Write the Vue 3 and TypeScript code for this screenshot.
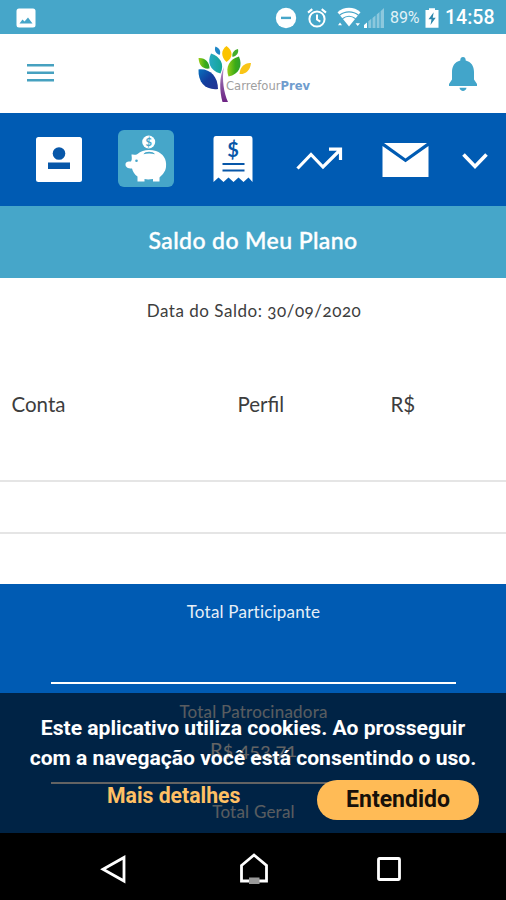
<script setup lang="ts">
interface TotalRow {
  label: string
  value: string
  kind: string
}

const columns: string[] = ['Conta', 'Perfil', 'R$']
const totals: TotalRow[] = [
  { label: 'Total Participante', value: '', kind: 'participante' },
  { label: 'Total Patrocinadora', value: 'R$ 453,71', kind: 'patrocinadora' },
  { label: 'Total Geral', value: '', kind: 'geral' },
]
</script>

<template>
  <div class="screen">
    <div class="status">
      <svg class="s-image" width="20" height="20" viewBox="0 0 20 20">
        <rect x="0.5" y="0.5" width="19" height="19" rx="2.5" fill="#fff" />
        <path d="M3.500 15.500 6.500 11.500 8.500 13.500 12 9.500 16.500 15.500Z" fill="#46a6c9" />
      </svg>
      <svg class="s-dnd" width="22" height="22" viewBox="0 0 22 22">
        <circle cx="11" cy="11" r="10.200" fill="#fff" />
        <rect x="6" y="9.700" width="10" height="2.400" fill="#46a6c9" />
      </svg>
      <svg class="s-alarm" width="20" height="20" viewBox="0 0 20 20" fill="none" stroke="#fff" stroke-width="2">
        <circle cx="10" cy="11" r="7.600" />
        <path d="M10 6.500V11.500L13.300 13.600M1 4.600 5.300 1.100M19 4.600 14.700 1.100" />
      </svg>
      <svg class="s-wifi" width="24" height="21" viewBox="0 0 24 21">
        <path d="M0.500 5.200C7 -0.700 17 -0.700 23.500 5.200L12 19.500Z" fill="#fff" />
        <path d="M2.500 8.200C8 3.700 16 3.700 21.500 8.200M5.300 11.800C9.500 8.600 14.500 8.600 18.700 11.800" fill="none" stroke="#46a6c9" stroke-width="1.200" />
        <path d="M1 18.200 3 15.500 5 18.200ZM18.500 16.200H23L20.700 19Z" fill="#fff" />
      </svg>
      <svg class="s-signal" width="20" height="20" viewBox="0 0 20 20" fill="#fff">
        <path d="M0 20V17L3 14.500V20Z" />
        <path d="M4.300 20V13.300L7.300 10.800V20ZM8.500 20V10L11.500 7.400V20ZM12.700 20V6.500L15.500 4V20ZM16.600 20V3.200L20 0V20Z" opacity=".38" />
      </svg>
      <span class="percent">89%</span>
      <svg class="s-battery" width="14" height="20" viewBox="0 0 14 20">
        <path d="M0.500 2H4V0.300H10V2H13.500V19.700H0.500Z" fill="#fff" />
        <path d="M8.700 4.300 3.500 11.200H6.500L5.500 17 10.700 9.700H7.700Z" fill="#2d87ac" />
      </svg>
      <span class="clock">14:58</span>
    </div>

    <header class="header">
      <svg class="burger" width="27" height="20" viewBox="0 0 27 20" fill="#46a1c0">
        <rect width="27" height="2.500" y="1" /><rect width="27" height="2.500" y="8.500" /><rect width="27" height="2.500" y="16" />
      </svg>
      <svg class="logo" width="116" height="60" viewBox="0 0 116 60">
        <defs>
          <linearGradient id="navy" x2="1" y2="1"><stop stop-color="#0871be" /><stop offset=".5" stop-color="#123d9d" /><stop offset="1" stop-color="#243294" /></linearGradient>
          <linearGradient id="teal" x2="1"><stop stop-color="#27aac4" /><stop offset="1" stop-color="#13a594" /></linearGradient>
          <linearGradient id="green" x2="1"><stop stop-color="#99cd16" /><stop offset=".6" stop-color="#3bab17" /><stop offset="1" stop-color="#2b9f2e" /></linearGradient>
          <linearGradient id="trunk" y2="1" x2="0"><stop stop-color="#c59bcc" /><stop offset=".5" stop-color="#8754a0" /><stop offset="1" stop-color="#6d2384" /></linearGradient>
        </defs>
        <path d="M1.500 24.500C12 23 21 31 21 44C9 45.500 1 38 1.500 24.500Z" fill="url(#navy)" />
        <path d="M1.500 13C8 12.500 12.500 17 12.500 23.500C5.500 24.500 2 20 1.500 13Z" fill="url(#green)" />
        <path d="M14 8.500C23 11.500 28 19 23.500 28.500C12.500 25.500 10 17 14 8.500Z" fill="url(#teal)" />
        <path d="M18.500 1.500C22.500 3 24.300 6.500 22.500 10C18.500 8.500 17 5 18.500 1.500Z" fill="#1e86c6" />
        <path d="M29.500 1C36.500 6 36 13 29.500 17C23.500 11.500 24 5 29.500 1Z" fill="#fbc300" />
        <path d="M41 4C42 8 39.500 11 35.500 12C34.500 8 37 5 41 4Z" fill="#42ad29" />
        <path d="M42 11.500C46 21 42 29.500 31.500 31.500C28 22 32.500 14 42 11.500Z" fill="url(#green)" />
        <path d="M54 18C53 26 48.500 29.500 42.500 29C43 21.500 48 17.500 54 18Z" fill="#f9c516" />
        <path d="M27 22C24.500 34 27 48 31 57H25.500C22.500 46 22 32 27 22Z" fill="url(#trunk)" />
        <text class="brand" x="29" y="44.500" textLength="84" lengthAdjust="spacingAndGlyphs">Carrefour<tspan class="brand-bold">Prev</tspan></text>
      </svg>
      <svg class="bell" width="30" height="36" viewBox="0 0 30 36" fill="#42a5ca">
        <path d="M15 1C13 1 12.300 2.500 12.300 4.400C6.700 5.700 4 10 4 16V23.500L1 28V30H29V28L26 23.500V16C26 10 23.300 5.700 17.700 4.400C17.700 2.500 17 1 15 1Z" />
        <path d="M11.500 31.800H18.500C18 36 12 36 11.500 31.800Z" />
      </svg>
    </header>

    <nav class="nav">
      <svg class="n-card" width="46" height="45" viewBox="0 0 46 45">
        <rect width="46" height="45" rx="2.500" fill="#fff" />
        <circle cx="23" cy="16.500" r="6.300" fill="#0757a9" />
        <rect x="12" y="25.500" width="22" height="6.500" fill="#0757a9" />
      </svg>
      <span class="active">
        <svg width="56" height="57" viewBox="0 0 56 57">
          <circle cx="30.700" cy="12" r="6.500" fill="#fff" />
          <text class="coin" x="30.700" y="16" text-anchor="middle">$</text>
          <path d="M13.500 24.500C16 24 18 25.500 19.500 24C24 19.500 32 19 38 21C45 23.500 49 29 48 37C47.500 42 44 45 41.500 47.500V51.500H35V49C31 49.600 29 49.600 26.500 49V51.500H19.500V46.500C16.500 44.500 15 42 14 38.500C9.500 38.500 7.500 37 7.500 34.500C7.500 32 9.500 31.500 13 31.500C14.500 29 13.500 27 13.500 24.500Z" fill="#fff" />
          <path d="M25.500 24.300C26.500 21 35.500 21 37 24.300C33 23.300 29 23.300 25.500 24.300Z" fill="#46a6c9" />
          <circle cx="18.500" cy="30.700" r="1.300" fill="#46a6c9" />
        </svg>
      </span>
      <svg class="n-receipt" width="40" height="47" viewBox="0 0 40 47">
        <path d="M3 0H37Q39.500 0 39.500 3V46L35.500 41.500 30.500 46 25.500 41.500 20.500 46 15.500 41.500 10.500 46 5.500 41.500 0.500 46V3Q0.500 0 3 0Z" fill="#fff" />
        <text class="bill" x="20" y="21" text-anchor="middle">$</text>
        <path d="M9.500 28H31.500M9.500 34.500H31.500" stroke="#0757a9" stroke-width="2.200" />
      </svg>
      <svg class="n-trend" width="47" height="24" viewBox="0 0 47 24" fill="none" stroke="#fff" stroke-width="3.200">
        <path d="M1.500 21.500 15 7.500 27 20 43.500 3.500M33 2.200H44.500V13" />
      </svg>
      <svg class="n-mail" width="47" height="34" viewBox="0 0 47 34" fill="#fff">
        <path d="M2 0H45L23.500 15.500Z" />
        <path d="M0.500 3 23.500 19.200 46.500 3V34H0.500Z" />
      </svg>
      <svg class="n-more" width="26" height="18" viewBox="0 0 26 18" fill="none" stroke="#fff" stroke-width="3.600">
        <path d="M1.500 2.500 13 14.500 24.500 2.500" />
      </svg>
    </nav>

    <h1 class="title">Saldo do Meu Plano</h1>

    <main class="content">
      <p class="date">Data do Saldo: 30/09/2020</p>
      <div class="columns">
        <span v-for="column in columns" :key="column">{{ column }}</span>
      </div>
      <div class="row"></div>
      <div class="row"></div>
    </main>

    <section class="totals">
      <div v-for="total in totals" :key="total.kind" class="total" :class="total.kind">
        <span class="label">{{ total.label }}</span>
        <span class="value">{{ total.value }}</span>
      </div>
      <aside class="cookies">
        <p class="notice">Este aplicativo utiliza cookies. Ao prosseguir<br>com a navegação você está consentindo o uso.</p>
        <div class="actions">
          <a class="details">Mais detalhes</a>
          <button class="accept">Entendido</button>
        </div>
      </aside>
    </section>

    <footer class="system">
      <svg width="28" height="30" viewBox="0 0 28 30" fill="none" stroke="#fff" stroke-width="2.800"><path d="M24 3.500V27L3 15.200Z" /></svg>
      <svg class="home" width="30" height="32" viewBox="0 0 30 32"><path d="M2.500 12.500 15 2 27.500 12.500V28H2.500Z" fill="none" stroke="#fff" stroke-width="2.800" /><rect x="10" y="24.500" width="10.500" height="6.500" fill="#999" /></svg>
      <svg width="26" height="26" viewBox="0 0 26 26"><rect x="2.500" y="2.500" width="21" height="21" rx="1" fill="none" stroke="#fff" stroke-width="2.800" /></svg>
    </footer>
  </div>
</template>

<style>
body {
  margin: 0;
}
</style>

<style scoped>
.screen {
  width: 506px;
  height: 900px;
  display: flex;
  flex-direction: column;
  overflow: hidden;
  background: #fff;
  color: #3d3d3d;
  font-family: Lato, "Liberation Sans", sans-serif;
}
.screen svg {
  display: block;
  flex: none;
}
.status {
  height: 34px;
  display: flex;
  align-items: center;
  box-sizing: border-box;
  padding: 1px 0 0 16px;
  background: #46a6c9;
  color: #fff;
  font-family: Roboto, sans-serif;
  white-space: nowrap;
}
.s-dnd {
  margin-left: 239px;
}
.s-alarm {
  margin-left: 9.500px;
}
.s-wifi {
  margin-left: 10px;
}
.s-signal {
  margin-left: 3.500px;
}
.percent {
  width: 34px;
  margin-left: 6px;
  font-size: 16px;
  letter-spacing: -0.1px;
  color: #e1f2f7;
}
.s-battery {
  margin-left: 1px;
}
.clock {
  margin-left: 6px;
  font-size: 19.500px;
  font-weight: 500;
}
.header {
  height: 79px;
  display: flex;
  align-items: flex-start;
}
.burger {
  margin: 29px 0 0 26.500px;
}
.logo {
  margin: 11px 0 0 143px;
}
.bell {
  margin: 22px 0 0 135.500px;
}
.brand {
  font-family: "DejaVu Sans", sans-serif;
  font-size: 12.500px;
  fill: #a0a0a0;
}
.brand-bold {
  font-weight: 700;
  fill: #6f9dce;
}
.nav {
  height: 93px;
  display: flex;
  align-items: flex-start;
  background: #005bb3;
}
.n-card {
  margin: 24px 0 0 36px;
}
.active {
  width: 56px;
  height: 57px;
  margin: 17px 0 0 36px;
  border-radius: 6px;
  background: #46a6c9;
}
.coin {
  font: 700 11px Lato, sans-serif;
  fill: #46a6c9;
}
.n-receipt {
  margin: 23px 0 0 38.500px;
}
.bill {
  font: 700 20px Lato, sans-serif;
  fill: #0757a9;
}
.n-trend {
  margin: 34px 0 0 43px;
}
.n-mail {
  margin: 30px 0 0 39px;
}
.n-more {
  margin: 39px 0 0 33px;
}
.title {
  height: 72px;
  margin: 0;
  background: #46a6c9;
  color: #fff;
  font-size: 23px;
  font-weight: 500;
  line-height: 69px;
  letter-spacing: 0.4px;
  text-align: center;
  -webkit-text-stroke: 0.4px #fff;
}
.content {
  height: 306px;
}
.date {
  margin: 0;
  height: 100px;
  padding-left: 2px;
  line-height: 65px;
  font-size: 17px;
  letter-spacing: 0.52px;
  text-align: center;
  font-feature-settings: "onum";
}
.columns {
  height: 104px;
  box-sizing: border-box;
  padding: 13px 0 0 11.500px;
  display: grid;
  grid-template-columns: 226px 153px 1fr;
  font-size: 20.500px;
  line-height: 26px;
  border-bottom: 2px solid #e5e5e5;
}
.row {
  height: 52px;
  box-sizing: border-box;
  border-bottom: 2px solid #e5e5e5;
}
.row:last-child {
  border: 0;
}
.totals {
  position: relative;
  height: 249px;
  overflow: hidden;
  background: #005bb3;
  color: #fff;
}
.total {
  width: 405px;
  height: 100px;
  box-sizing: border-box;
  margin: 0 0 0 51px;
  padding-top: 15px;
  display: flex;
  flex-direction: column;
  align-items: center;
  border-bottom: 2px solid #fff;
  font-size: 17px;
  line-height: 26px;
}
.label {
  letter-spacing: 0.22px;
  opacity: 0.9;
}
.value {
  margin-top: 11px;
  font-size: 20px;
  font-feature-settings: "onum";
}
.cookies {
  position: absolute;
  inset: 109px 0 0;
  background: rgba(0, 0, 0, 0.61);
  font-family: Roboto, sans-serif;
  font-weight: 700;
}
.notice {
  margin: 0;
  padding-top: 20px;
  font-size: 21.100px;
  line-height: 30px;
  text-align: center;
  white-space: nowrap;
}
.actions {
  display: flex;
  align-items: flex-start;
  margin-top: 7px;
  padding-left: 107px;
}
.details {
  width: 210px;
  color: #ffc064;
  font-size: 21.200px;
  line-height: 32px;
}
.accept {
  width: 162px;
  height: 40px;
  padding: 0;
  border: 0;
  border-radius: 20px;
  background: #ffbb56;
  color: #17110a;
  font: 700 23px/38px Roboto, sans-serif;
}
.system {
  height: 67px;
  display: flex;
  align-items: center;
  box-sizing: border-box;
  padding: 5px 104px 0 100px;
  justify-content: space-between;
  background: #000;
}
.home {
  margin-left: 3px;
}
</style>
